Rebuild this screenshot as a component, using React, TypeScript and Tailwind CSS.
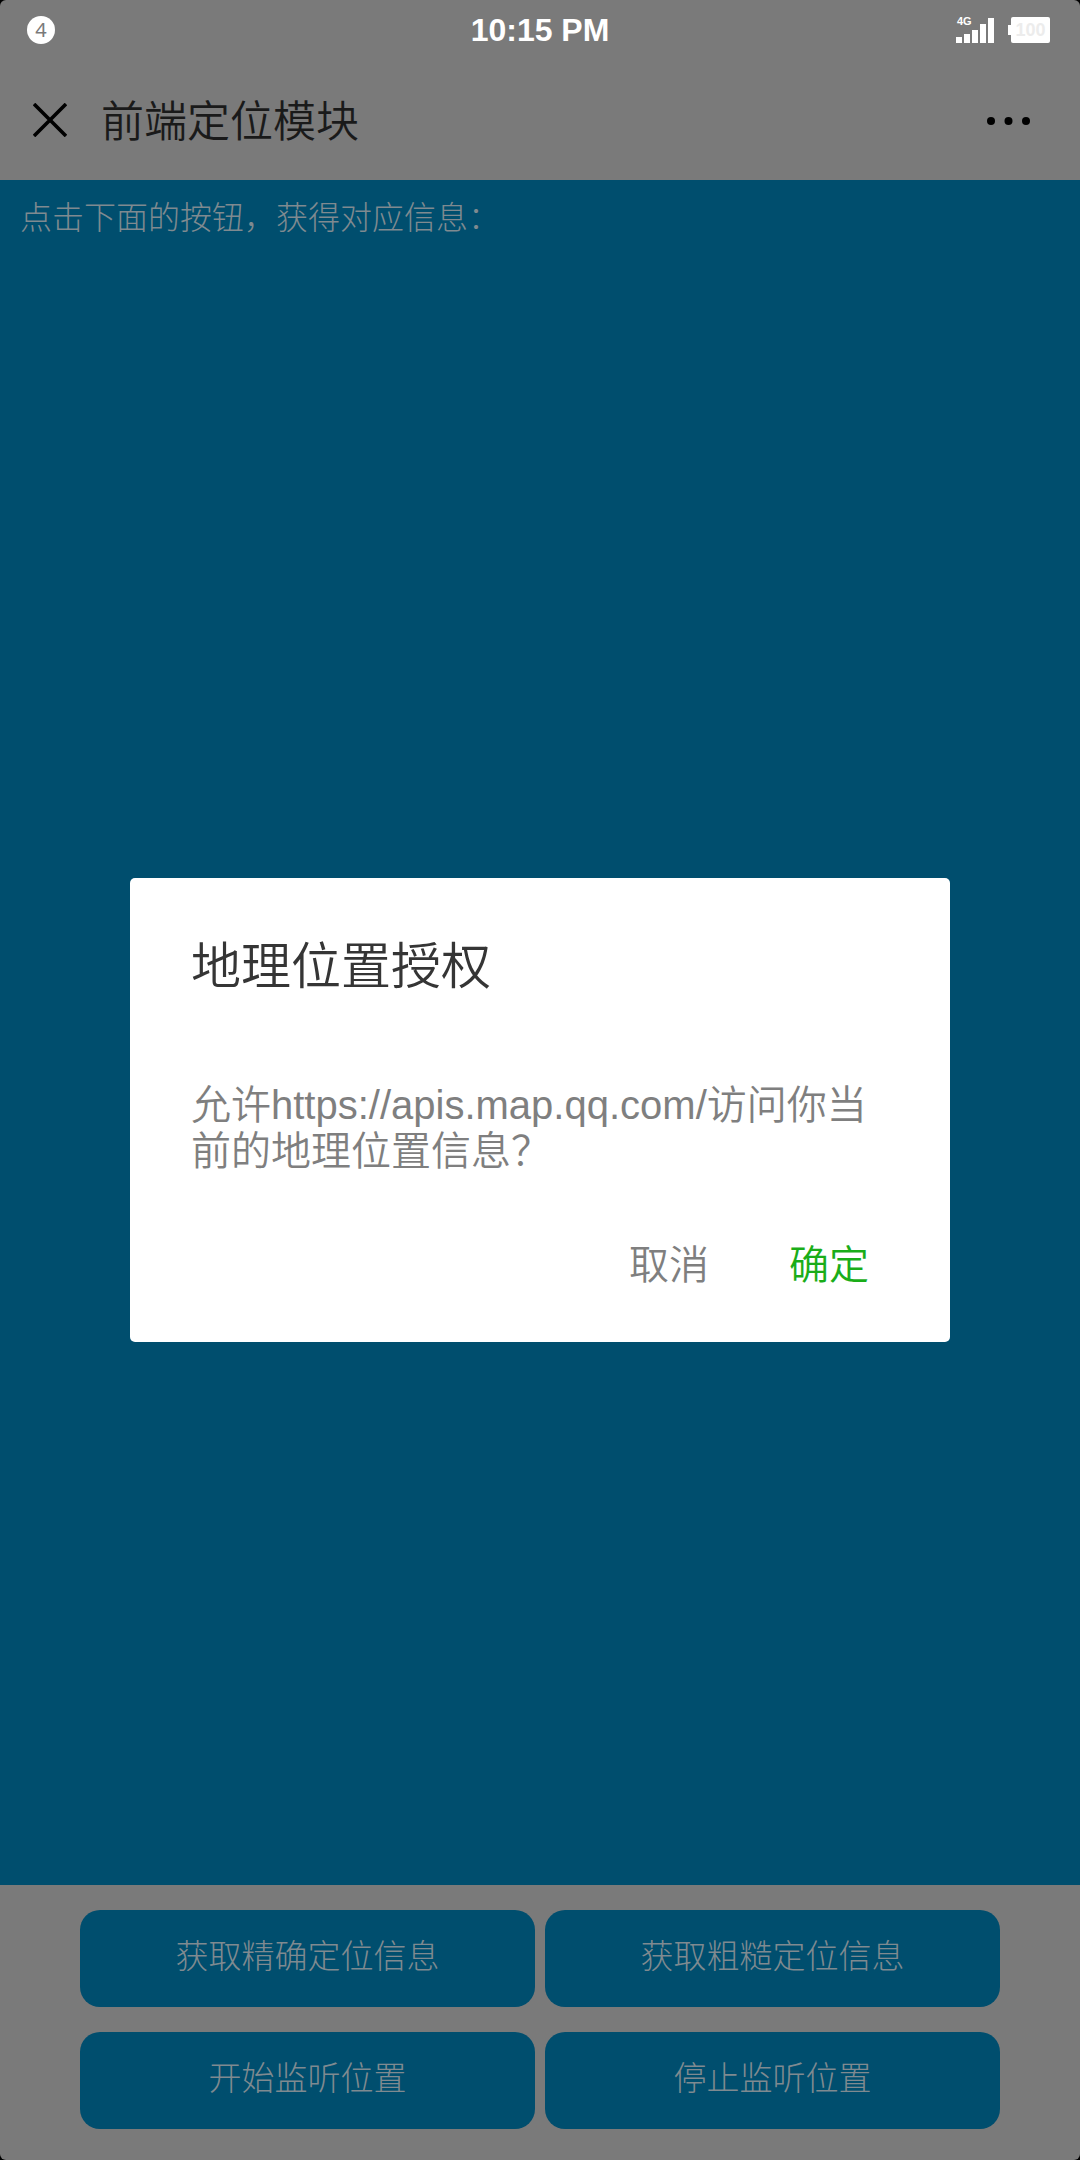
import React from "react";

const actions = ["获取精确定位信息", "获取粗糙定位信息", "开始监听位置", "停止监听位置"];

function SignalIcon() {
  return (
    <svg viewBox="0 0 38 25" className="h-[25px] w-[38px]" fill="#fff" aria-hidden="true">
      <rect x="0" y="19" width="6" height="6" />
      <rect x="8" y="16" width="6" height="9" />
      <rect x="16" y="12" width="6" height="13" />
      <rect x="24" y="6" width="6" height="19" />
      <rect x="32" y="0" width="6" height="25" />
    </svg>
  );
}

function StatusBar() {
  return (
    <div className="grid h-[60px] grid-cols-3 items-center px-[27px] text-white">
      <span className="flex size-7 items-center justify-center rounded-full bg-white font-['Noto_Sans'] text-[20px] leading-none text-[#7a7a7a]">
        4
      </span>
      <span className="text-center font-['Liberation_Sans',sans-serif] text-[32px] leading-none font-bold">
        10:15 PM
      </span>
      <div className="flex items-center justify-end gap-[14px] pr-[3px]">
        <div className="relative">
          <span className="absolute -top-0.5 left-px font-['Liberation_Sans',sans-serif] text-[11px] leading-none font-bold">
            4G
          </span>
          <SignalIcon />
        </div>
        <div className="flex items-center">
          <span className="h-[10px] w-[3px] bg-white" />
          <span className="flex h-[26px] w-[39px] items-center justify-center rounded-xs bg-white font-['Liberation_Sans',sans-serif] text-[18px] leading-none font-bold text-[#ececec]">
            100
          </span>
        </div>
      </div>
    </div>
  );
}

function Header() {
  return (
    <header className="flex h-[120px] items-center pr-[49px] pl-[33px]">
      <button type="button" aria-label="关闭" className="mr-[34px]">
        <svg viewBox="0 0 34 34" className="size-[34px]" stroke="#000" strokeWidth="3.6" fill="none">
          <path d="M1 1 33 33M33 1 1 33" />
        </svg>
      </button>
      <h1 className="flex-1 pb-1 text-[43px] leading-[60px] font-[350] text-[#1a1a1a]">前端定位模块</h1>
      <button type="button" aria-label="更多">
        <svg viewBox="0 0 44 10" className="h-[10px] w-[44px]" fill="#000">
          <circle cx="4" cy="6" r="4" />
          <circle cx="21.5" cy="6" r="4" />
          <circle cx="39" cy="6" r="4" />
        </svg>
      </button>
    </header>
  );
}

function PermissionDialog() {
  return (
    <div className="absolute inset-x-0 top-[60px] bottom-0 flex items-center justify-center px-[130px]">
      <div
        role="dialog"
        aria-modal="true"
        aria-labelledby="dialog-title"
        className="w-full rounded-[5px] bg-white px-[61px] pt-[54px] pb-[50px]"
      >
        <h2 id="dialog-title" className="text-[50px] leading-[60px] font-[350] text-[#353535]">
          地理位置授权
        </h2>
        <p className="mt-[90px] font-['Liberation_Sans','Noto_Sans_CJK_SC',sans-serif] text-[40px] leading-[46px] font-[350] text-[#7f7f7f]">
          允许https://apis.map.qq.com/访问你当前的地理位置信息？
        </p>
        <div className="mt-[58px] flex justify-end gap-[80px] pr-[20px] text-[40px] leading-[60px] font-[350]">
          <button type="button" className="text-[#7f7f7f]">
            取消
          </button>
          <button type="button" className="text-[#1aad19]">
            确定
          </button>
        </div>
      </div>
    </div>
  );
}

export default function App() {
  return (
    <div className="bg-black font-['Noto_Sans_CJK_SC',sans-serif]">
      <div className="relative flex min-h-screen flex-col overflow-hidden rounded-[6px] bg-[#7a7a7a]">
        <StatusBar />
        <Header />
        <main className="flex-1 bg-[#004e6e] px-5 pt-[11px]">
          <p className="text-[32px] leading-[48px] font-light text-[#7f8a90]">
            点击下面的按钮，获得对应信息：
          </p>
        </main>
        <footer className="grid grid-cols-2 gap-x-[10px] gap-y-[25px] px-[80px] pt-[25px] pb-[31px]">
          {actions.map((label) => (
            <button
              key={label}
              type="button"
              className="rounded-[20px] bg-[#004e6e] pt-[20px] pb-[29px] text-[33px] leading-[48px] font-light text-[#7f8a90]"
            >
              {label}
            </button>
          ))}
        </footer>
        <PermissionDialog />
      </div>
    </div>
  );
}
